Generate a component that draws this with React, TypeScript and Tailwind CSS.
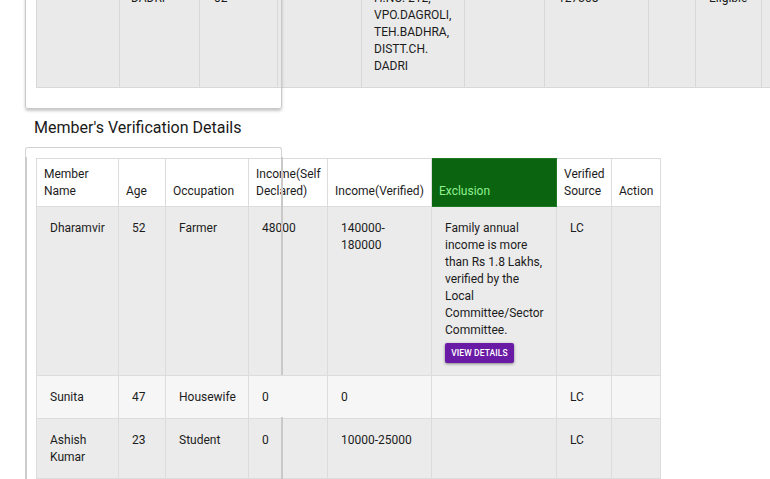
import React from "react";

const topCols = [83, 80, 78, 84, 103, 80, 104, 47, 66, 60];
const memberCols = [82, 47, 83, 79, 104, 125, 55, 49];

type Row = {
  name: string[];
  age: string;
  occ: string;
  self: string;
  verified: string[];
  excl: string[] | null;
  src: string;
  bg: string;
};

const rows: Row[] = [
  {
    name: ["Dharamvir"],
    age: "52",
    occ: "Farmer",
    self: "48000",
    verified: ["140000-", "180000"],
    excl: [
      "Family annual",
      "income is more",
      "than Rs 1.8 Lakhs,",
      "verified by the",
      "Local",
      "Committee/Sector",
      "Committee.",
    ],
    src: "LC",
    bg: "bg-[#ebebeb]",
  },
  {
    name: ["Sunita"],
    age: "47",
    occ: "Housewife",
    self: "0",
    verified: ["0"],
    excl: null,
    src: "LC",
    bg: "bg-[#f6f6f6]",
  },
  {
    name: ["Ashish", "Kumar"],
    age: "23",
    occ: "Student",
    self: "0",
    verified: ["10000-25000"],
    excl: null,
    src: "LC",
    bg: "bg-[#ebebeb]",
  },
];

function Lines({ lines }: { lines: string[] }) {
  return (
    <>
      {lines.map((l, i) => (
        <div key={i} className="whitespace-nowrap">
          {l}
        </div>
      ))}
    </>
  );
}

export default function App() {
  const td = "border border-[#dcdcdc] align-top px-[13px] pt-[13px] pb-[12px]";
  const th = "border border-[#dcdcdc] align-bottom px-[7px] pt-[7px] pb-[6px] text-left font-normal";
  const tc = "border border-[#d8d8d8] align-top pt-[14px] pb-[12px]";
  return (
    <div
      className="relative w-[770px] h-[479px] overflow-hidden bg-white text-[#1c1c1c]"
      style={{ fontFamily: "Roboto, 'Liberation Sans', sans-serif" }}
    >
      {/* Top (cut-off) table */}
      <div className="pl-[36px] -mt-[25px]">
        <table className="table-fixed border-collapse text-[12px] leading-[17px]" style={{ width: topCols.reduce((a, b) => a + b, 0) }}>
          <colgroup>
            {topCols.map((w, i) => (
              <col key={i} style={{ width: w }} />
            ))}
          </colgroup>
          <tbody>
            <tr className="bg-[#eaeaea]">
              <td className={tc + " px-[12px]"}></td>
              <td className={tc + " px-[11px]"}>DADRI</td>
              <td className={tc + " px-[14px]"}>02</td>
              <td className={tc + " px-[12px]"}></td>
              <td className={tc + " px-[12px]"}>
                <Lines lines={["H.NO. 212,", "VPO.DAGROLI,", "TEH.BADHRA,", "DISTT.CH.", "DADRI"]} />
              </td>
              <td className={tc + " px-[12px]"}></td>
              <td className={tc + " px-[13px]"}>127308</td>
              <td className={tc + " px-[12px]"}></td>
              <td className={tc + " px-[13px]"}>Eligible</td>
              <td className={tc + " px-[12px]"}></td>
            </tr>
          </tbody>
        </table>
      </div>

      {/* Heading */}
      <div className="pl-[34px] mt-[30px] text-[16px] leading-[20px] text-[#1a1a1a]">
        Member's Verification Details
      </div>

      {/* Member table */}
      <div className="pl-[36px] mt-[20px]">
        <table className="table-fixed border-collapse text-[12px] leading-[17px] w-[624px]">
          <colgroup>
            {memberCols.map((w, i) => (
              <col key={i} style={{ width: w }} />
            ))}
          </colgroup>
          <thead>
            <tr className="bg-white">
              <th className={th}>
                Member
                <br />
                Name
              </th>
              <th className={th}>Age</th>
              <th className={th}>Occupation</th>
              <th className={th}>
                Income(Self
                <br />
                Declared)
              </th>
              <th className={th + " whitespace-nowrap"}>Income(Verified)</th>
              <th className="border border-[#1d7a22] bg-[#0a6410] text-[#8ff08f] align-bottom px-[7px] pt-[7px] pb-[6px] text-left font-normal">
                Exclusion
              </th>
              <th className={th}>
                Verified
                <br />
                Source
              </th>
              <th className={th}>Action</th>
            </tr>
          </thead>
          <tbody>
            {rows.map((r, i) => (
              <tr key={i} className={r.bg}>
                <td className={td}>
                  <Lines lines={r.name} />
                </td>
                <td className={td}>{r.age}</td>
                <td className={td}>{r.occ}</td>
                <td className={td}>{r.self}</td>
                <td className={td}>
                  <Lines lines={r.verified} />
                </td>
                <td className={td}>
                  {r.excl && (
                    <>
                      <Lines lines={r.excl} />
                      <button className="mt-[4px] h-[20px] w-[69px] rounded-[2px] bg-[#6a1ba6] text-[8.5px] leading-[20px] font-medium tracking-[0.1px] text-white shadow-[0_1px_3px_rgba(0,0,0,0.45)]">
                        VIEW DETAILS
                      </button>
                    </>
                  )}
                </td>
                <td className={td}>{r.src}</td>
                <td className={td}></td>
              </tr>
            ))}
          </tbody>
        </table>
      </div>

      {/* Overlay card ghosts */}
      <div className="absolute left-[25px] top-[-10px] w-[257px] h-[119px] rounded-[3px] border border-[#c9c9c9] shadow-[0_2px_3px_rgba(0,0,0,0.22)] pointer-events-none" />
      <div className="absolute left-[25px] top-[147px] w-[257px] h-[11px] rounded-t-[3px] border-l border-t border-r border-[#d2d2d2] pointer-events-none" />
      <div className="absolute left-[25px] top-[157px] w-[2px] h-[340px] bg-[#cdcdcd] pointer-events-none" />
      <div className="absolute left-[281px] top-[157px] w-[2px] h-[218px] bg-[#c9c9c9] pointer-events-none" />
      <div className="absolute left-[281px] top-[417px] w-[2px] h-[80px] bg-[#c9c9c9] pointer-events-none" />
    </div>
  );
}
